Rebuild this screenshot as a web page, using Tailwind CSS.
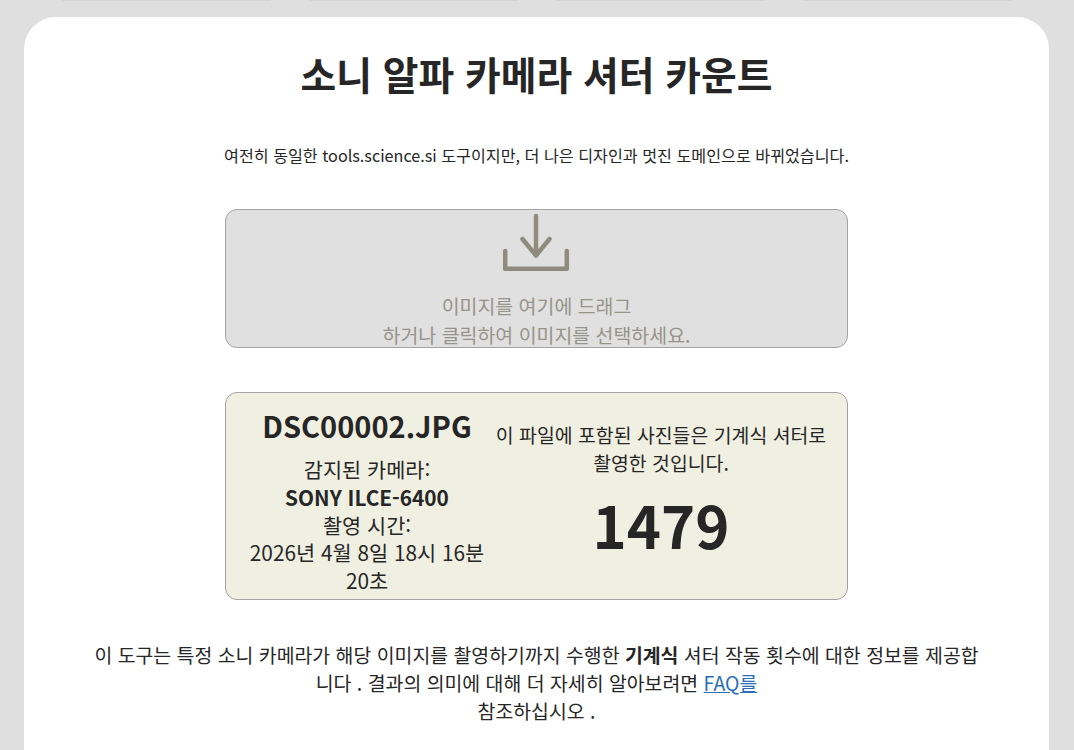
<!DOCTYPE html>
<html lang="ko">
<head>
<meta charset="utf-8">
<script src="https://cdn.jsdelivr.net/npm/@tailwindcss/browser@4"></script>
<title>소니 알파 카메라 셔터 카운트</title>
</head>
<body class="h-[750px] overflow-hidden bg-[#dfdfdf] font-['Noto_Sans_CJK_KR',sans-serif] text-[#262626]">

  <nav class="flex h-[17px] items-start justify-center gap-[38px]">
    <div class="h-px w-[209px] bg-[#d4d4d4]"></div>
    <div class="h-px w-[209px] bg-[#d4d4d4]"></div>
    <div class="h-px w-[209px] bg-[#d4d4d4]"></div>
    <div class="h-px w-[209px] bg-[#d4d4d4]"></div>
  </nav>

  <main class="ml-6 mr-[25px] h-[733px] rounded-t-[32px] bg-white pt-7">
    <h1 class="text-center text-[38.8px] leading-[56px] font-bold">소니 알파 카메라 셔터 카운트</h1>

    <p class="mt-[42px] text-center text-[16.17px] leading-6">여전히 동일한 tools.science.si 도구이지만, 더 나은 디자인과 멋진 도메인으로 바뀌었습니다.</p>

    <section class="mx-auto mt-[42px] flex h-[139px] w-[623px] flex-col items-center overflow-hidden rounded-xl border border-[#a3a3a3] bg-[#e0e0e0] pt-[3px] text-center text-[19.45px] leading-[28.8px] text-[#96948a]">
      <svg class="h-[60px] w-[67px] shrink-0" viewBox="0 0 67 60" fill="none" stroke="#8f8c7e" stroke-width="4.500" stroke-linecap="round" stroke-linejoin="round">
        <path d="M33 3v39.500M19.500 26L33 42.500 46.500 26"/>
        <path d="M2.200 38v17.800h61.600V38"/>
      </svg>
      <p class="mt-[19px]">이미지를 여기에 드래그<br>하거나 클릭하여 이미지를 선택하세요.</p>
    </section>

    <section class="mx-auto mt-11 flex h-[208px] w-[623px] items-start rounded-xl border border-[#a3a3a3] bg-[#f0f0e2] text-center text-[20.8px] leading-[27.75px]">
      <div class="ml-[21px] w-[240px] pt-[10px]">
        <h2 class="text-[29px] leading-[44px] font-bold">DSC00002.JPG</h2>
        <p class="mt-[9px]">감지된 카메라:<br><b class="font-bold">SONY ILCE-6400</b><br>촬영 시간:<br>2026년 4월 8일 18시 16분 20초</p>
      </div>
      <div class="ml-[4px] w-[340px] pt-[28px] text-[19.4px] leading-[28px]">
        <p>이 파일에 포함된 사진들은 기계식 셔터로 촬영한 것입니다.</p>
        <div class="mt-[5px] text-[58px] leading-[84px] font-bold">1479</div>
      </div>
    </section>

    <p class="mx-auto mt-[41px] w-[890px] text-center text-[19.4px] leading-7">이 도구는 특정 소니 카메라가 해당 이미지를 촬영하기까지 수행한 <b class="font-bold">기계식</b> 셔터 작동 횟수에 대한 정보를 제공합니다 . 결과의 의미에 대해 더 자세히 알아보려면 <a href="#" class="text-[#2a6db5] underline">FAQ를</a><br>참조하십시오 .</p>
  </main>

</body>
</html>
